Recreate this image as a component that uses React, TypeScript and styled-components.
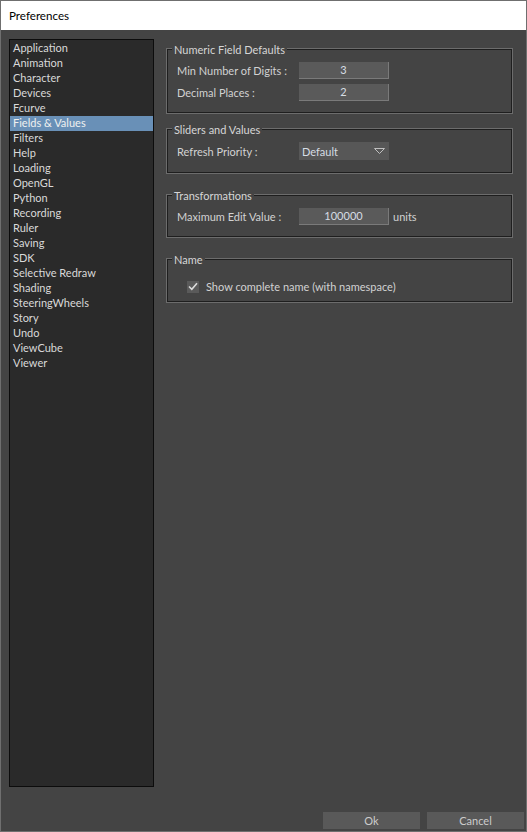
import React from 'react';
import styled, { createGlobalStyle } from 'styled-components';

const GlobalStyle = createGlobalStyle`
  html, body {
    margin: 0;
    padding: 0;
    background: #444444;
  }
  body {
    font-family: Lato, "Noto Sans", sans-serif;
    font-size: 11px;
  }
`;

const Window = styled.div`
  display: flex;
  flex-direction: column;
  width: 527px;
  height: 832px;
  box-sizing: border-box;
  border: 1px solid #6f6f6f;
  background: #444444;
`;

const TitleBar = styled.div`
  display: flex;
  align-items: center;
  height: 29px;
  padding-left: 8px;
  background: #ffffff;
  color: #000000;
  font-size: 11.6px;
`;

const Body = styled.div`
  display: flex;
  flex-direction: column;
  flex: 1 0;
`;

const Main = styled.div`
  display: flex;
  flex-direction: row;
  padding: 9px 0 0 8px;
`;

const List = styled.div`
  display: flex;
  flex-direction: column;
  width: 145px;
  height: 748px;
  box-sizing: border-box;
  border: 1px solid #0c0c0c;
  background: #2a2a2a;
  padding-top: 1px;
`;

const Item = styled.div<{ $selected?: boolean }>`
  height: 15px;
  line-height: 14px;
  padding-left: 3px;
  color: ${(p) => (p.$selected ? '#f0f0f0' : '#d9d9d9')};
  background: ${(p) => (p.$selected ? '#6990b7' : 'transparent')};
  white-space: nowrap;
`;

const Content = styled.div`
  display: flex;
  flex-direction: column;
  margin: 10px 0 0 13px;
  width: 345px;
`;

const Group = styled.div<{ $top: number; $pt: number; $pb: number }>`
  position: relative;
  display: flex;
  flex-direction: column;
  gap: 5px;
  margin-top: ${(p) => p.$top}px;
  padding: ${(p) => p.$pt}px 0 ${(p) => p.$pb}px 9px;
  border: 1px solid #1e1e1e;
  box-shadow: 0 0 0 1px #6c6c6c;
`;

const GroupTitle = styled.div`
  position: absolute;
  top: -8px;
  left: 4px;
  padding: 0 2px;
  line-height: 15px;
  background: #444444;
  color: #d6d6d6;
`;

const Row = styled.div`
  display: flex;
  flex-direction: row;
  align-items: center;
`;

const Label = styled.div`
  width: 122px;
  color: #d2d2d2;
`;

const Field = styled.div`
  width: 90px;
  height: 17px;
  box-sizing: border-box;
  line-height: 16px;
  text-align: center;
  background: #5a5a5a;
  border-right: 1px solid #7a7a7a;
  border-bottom: 1px solid #7a7a7a;
  color: #d6dde4;
`;

const Unit = styled.div`
  margin-left: 4px;
  color: #d2d2d2;
`;

const Select = styled.div`
  display: flex;
  align-items: center;
  justify-content: space-between;
  width: 90px;
  height: 18px;
  box-sizing: border-box;
  padding: 0 4px 0 3px;
  background: #575757;
  color: #d6dde4;
`;

const Check = styled.div`
  display: flex;
  flex-direction: row;
  align-items: center;
  margin-left: 10px;
  color: #d2d2d2;
`;

const Box = styled.div`
  display: flex;
  align-items: center;
  justify-content: center;
  width: 12px;
  height: 12px;
  margin-right: 7px;
  background: #5a5a5a;
`;

const Footer = styled.div`
  display: flex;
  flex-direction: row;
  justify-content: flex-end;
  gap: 7px;
  margin-top: 25px;
  padding-right: 2px;
`;

const Button = styled.div`
  width: 97px;
  height: 17px;
  line-height: 17px;
  text-align: center;
  background: #595959;
  color: #cccccc;
`;

const items = [
  'Application', 'Animation', 'Character', 'Devices', 'Fcurve', 'Fields & Values',
  'Filters', 'Help', 'Loading', 'OpenGL', 'Python', 'Recording', 'Ruler', 'Saving',
  'SDK', 'Selective Redraw', 'Shading', 'SteeringWheels', 'Story', 'Undo',
  'ViewCube', 'Viewer',
];

function Arrow() {
  return (
    <svg width="11" height="7" viewBox="0 0 11 7">
      <path d="M0.5 0.5 H10.5 L5.5 5.5 Z" fill="none" stroke="#bfbfbf" strokeWidth="1" />
    </svg>
  );
}

function Tick() {
  return (
    <svg width="10" height="9" viewBox="0 0 10 9">
      <path d="M1 4.5 L3.8 7.3 L9 1.2" fill="none" stroke="#dcdcdc" strokeWidth="1.6" />
    </svg>
  );
}

function App() {
  return (
    <>
      <GlobalStyle />
      <Window>
        <TitleBar>Preferences</TitleBar>
        <Body>
          <Main>
            <List>
              {items.map((it) => (
                <Item key={it} $selected={it === 'Fields & Values'}>{it}</Item>
              ))}
            </List>
            <Content>
              <Group $top={0} $pt={12} $pb={11}>
                <GroupTitle>Numeric Field Defaults</GroupTitle>
                <Row>
                  <Label>Min Number of Digits :</Label>
                  <Field>3</Field>
                </Row>
                <Row>
                  <Label>Decimal Places :</Label>
                  <Field>2</Field>
                </Row>
              </Group>
              <Group $top={16} $pt={12} $pb={12}>
                <GroupTitle>Sliders and Values</GroupTitle>
                <Row>
                  <Label>Refresh Priority :</Label>
                  <Select>
                    <span>Default</span>
                    <Arrow />
                  </Select>
                </Row>
              </Group>
              <Group $top={22} $pt={12} $pb={11}>
                <GroupTitle>Transformations</GroupTitle>
                <Row>
                  <Label>Maximum Edit Value :</Label>
                  <Field>100000</Field>
                  <Unit>units</Unit>
                </Row>
              </Group>
              <Group $top={22} $pt={20} $pb={8}>
                <GroupTitle>Name</GroupTitle>
                <Check>
                  <Box><Tick /></Box>
                  Show complete name (with namespace)
                </Check>
              </Group>
            </Content>
          </Main>
          <Footer>
            <Button>Ok</Button>
            <Button>Cancel</Button>
          </Footer>
        </Body>
      </Window>
    </>
  );
}

export default App;
